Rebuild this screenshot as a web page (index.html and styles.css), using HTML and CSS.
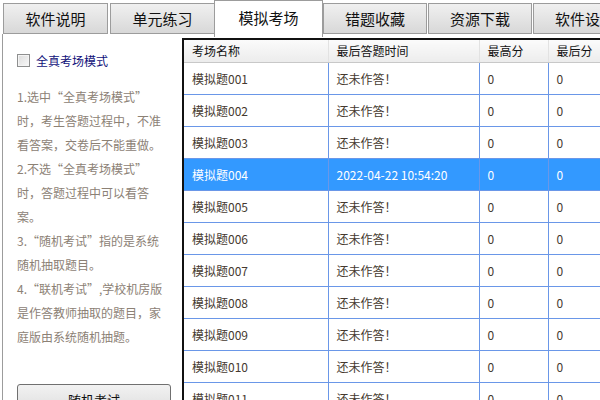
FILE: index.html
```html
<!DOCTYPE html>
<html lang="zh-CN">
<head>
    <meta charset="UTF-8">
    <title>模拟考场</title>
    <link rel="stylesheet" href="styles.css">
</head>
<body>

    <div class="tabs">
        <div class="tab">软件说明</div>
        <div class="tab">单元练习</div>
        <div class="tab active">模拟考场</div>
        <div class="tab narrow">错题收藏</div>
        <div class="tab narrow">资源下载</div>
        <div class="tab narrow">软件设置</div>
    </div>

    <div class="main">
        <div class="side">
            <label class="mode">
                <span class="check"></span>
                全真考场模式
            </label>
            <p class="tips">
                1.选中“全真考场模式”<br>
                时，考生答题过程中，不准<br>
                看答案，交卷后不能重做。<br>
                2.不选“全真考场模式”<br>
                时，答题过程中可以看答<br>
                案。<br>
                3.“随机考试”指的是系统<br>
                随机抽取题目。<br>
                4.“联机考试”,学校机房版<br>
                是作答教师抽取的题目，家<br>
                庭版由系统随机抽题。
            </p>
            <button class="btn">随机考试</button>
        </div>

        <div class="grid-wrap">
            <table class="grid">
                <thead>
                    <tr>
                        <th class="c1">考场名称</th>
                        <th class="c2">最后答题时间</th>
                        <th class="c3">最高分</th>
                        <th class="c4">最后分</th>
                    </tr>
                </thead>
                <tbody>
                    <tr><td>模拟题001</td><td>还未作答！</td><td>0</td><td>0</td></tr>
                    <tr><td>模拟题002</td><td>还未作答！</td><td>0</td><td>0</td></tr>
                    <tr><td>模拟题003</td><td>还未作答！</td><td>0</td><td>0</td></tr>
                    <tr class="selected"><td>模拟题004</td><td>2022-04-22 10:54:20</td><td>0</td><td>0</td></tr>
                    <tr><td>模拟题005</td><td>还未作答！</td><td>0</td><td>0</td></tr>
                    <tr><td>模拟题006</td><td>还未作答！</td><td>0</td><td>0</td></tr>
                    <tr><td>模拟题007</td><td>还未作答！</td><td>0</td><td>0</td></tr>
                    <tr><td>模拟题008</td><td>还未作答！</td><td>0</td><td>0</td></tr>
                    <tr><td>模拟题009</td><td>还未作答！</td><td>0</td><td>0</td></tr>
                    <tr><td>模拟题010</td><td>还未作答！</td><td>0</td><td>0</td></tr>
                    <tr><td>模拟题011</td><td>还未作答！</td><td>0</td><td>0</td></tr>
                    <tr><td>模拟题012</td><td>还未作答！</td><td>0</td><td>0</td></tr>
                </tbody>
            </table>
        </div>
    </div>

</body>
</html>
```

FILE: styles.css
```css
* {
    padding: 0;
    margin: 0;
    box-sizing: border-box;
}

body {
    width: 600px;
    height: 400px;
    overflow: hidden;
    background: #fff;
    font-family: "Noto Sans CJK SC", "Liberation Sans", sans-serif;
    font-size: 12px;
    color: #45392f;
}

/* tab strip */
.tabs {
    display: flex;
    align-items: flex-end;
    height: 34px;
    padding-left: 3px;
    white-space: nowrap;
}

.tab {
    width: 105px;
    height: 31px;
    margin-right: 2px;
    flex-shrink: 0;
    border: 1px solid #9c9c9c;
    background: linear-gradient(#f0f0f0, #d8d8d8);
    font-size: 15px;
    line-height: 29px;
    text-align: center;
    color: #111;
}

.tab.narrow {
    width: 104px;
    margin-right: 1px;
}

.tab.active {
    width: 109px;
    height: 37px;
    margin: 0 0 -3px -3px;
    border-bottom: none;
    background: #fff;
    line-height: 33px;
    position: relative;
}

/* body of the page */
.main {
    display: flex;
    height: 366px;
}

.side {
    width: 180px;
    margin-left: 2px;
    border-left: 1px solid #9c9c9c;
    padding: 19px 0 0 14px;
    display: flex;
    flex-direction: column;
}

.mode {
    display: flex;
    align-items: center;
    gap: 6px;
    color: #10107a;
    height: 14px;
}

.check {
    width: 13px;
    height: 13px;
    border: 1px solid #8e8f8f;
    background: linear-gradient(135deg, #dcdcdc, #f8f8f8);
    box-shadow: inset 0 0 0 1px #f4f4f4;
}

.tips {
    margin-top: 18px;
    line-height: 24px;
    color: #8c8175;
    white-space: nowrap;
}

.btn {
    margin-top: auto;
    margin-bottom: -14px;
    width: 154px;
    height: 30px;
    font-family: inherit;
    font-size: 13px;
    color: #111;
    border: 1px solid #707070;
    border-radius: 3px;
    background: linear-gradient(#f2f2f2, #dddddd);
}

/* data grid */
.grid-wrap {
    flex: 1;
    margin-top: 4px;
    overflow: hidden;
    border-top: 2px solid #111;
    border-left: 2px solid #111;
}

.grid {
    width: 460px;
    border-collapse: collapse;
    table-layout: fixed;
}

.grid th {
    height: 22px;
    padding-left: 8px;
    text-align: left;
    font-weight: normal;
    color: #111;
    background: linear-gradient(#fbfbfb, #ececec);
    border-right: 1px solid #e2e2e2;
    border-bottom: 1px solid #c8c8c8;
}

.grid .c1 { width: 144px; }
.grid .c2 { width: 151px; }
.grid .c3 { width: 69px; }
.grid .c4 { width: 96px; }

.grid td {
    height: 32px;
    padding-left: 8px;
    border-right: 1px solid #6a97e8;
    border-bottom: 1px solid #6a97e8;
    white-space: nowrap;
}

.grid tr.selected td {
    background: #3399ff;
    color: #fff;
}
```
